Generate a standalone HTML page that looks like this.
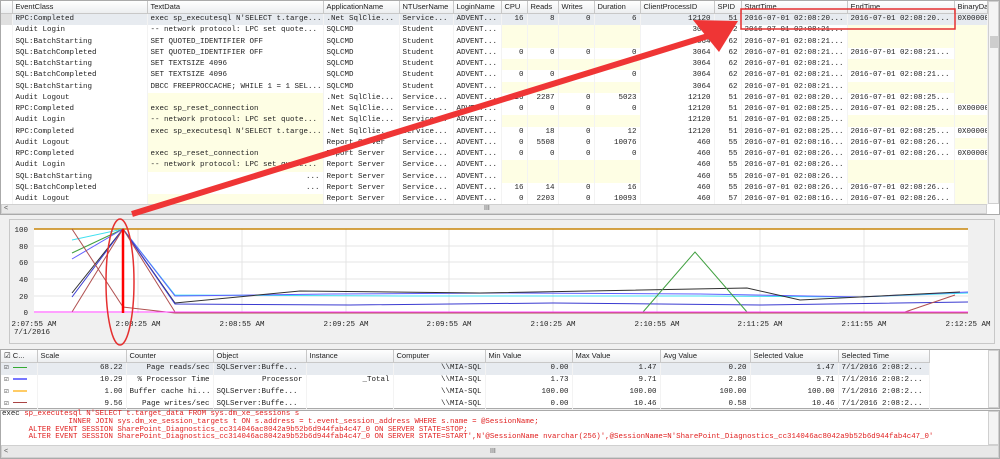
<!DOCTYPE html>
<html><head><meta charset="utf-8"><style>
*{margin:0;padding:0;box-sizing:border-box}
body{width:1000px;height:459px;background:#f0f0f0;position:relative;overflow:hidden;font-family:"Liberation Sans",sans-serif}
.abs{position:absolute}
table{border-collapse:collapse;table-layout:fixed;position:absolute}
td{font:7.5px/11.25px "Liberation Mono",monospace;color:#222;white-space:nowrap;overflow:hidden;padding:0 3px;height:11.25px;border-right:1px solid #f3f3f3}
th{font:7.5px/12px "Liberation Sans",sans-serif;color:#222;font-weight:normal;text-align:left;padding:0 3px;height:12px;background:linear-gradient(#fff,#eceef0);border-right:1px solid #c8c8c8;border-bottom:1px solid #c8c8c8;white-space:nowrap;overflow:hidden}
.r{text-align:right}.y{background:#fefee4}
tr.sel td{background:#e7ebf0}
.sb{background:#e8e8e8;border:1px solid #d0d0d0}
</style></head><body>
<div class="abs" style="left:0;top:0;width:1000px;height:215px;background:#fff;border:1px solid #aaa"></div>
<table style="left:1px;top:1px;width:986px">
<colgroup><col style="width:11px"><col style="width:135px"><col style="width:176px"><col style="width:76px"><col style="width:54px"><col style="width:48px"><col style="width:26px"><col style="width:31px"><col style="width:36px"><col style="width:46px"><col style="width:74px"><col style="width:27px"><col style="width:106px"><col style="width:107px"><col style="width:33px"></colgroup>
<tr><th></th><th>EventClass</th><th>TextData</th><th>ApplicationName</th><th>NTUserName</th><th>LoginName</th><th>CPU</th><th>Reads</th><th>Writes</th><th>Duration</th><th>ClientProcessID</th><th>SPID</th><th>StartTime</th><th>EndTime</th><th>BinaryDat</th></tr>
<tr class="sel"><td style="background:#e0e0e0"></td><td>RPC:Completed</td><td>exec sp_executesql N'SELECT t.targe...</td><td>.Net SqlClie...</td><td>Service...</td><td>ADVENT...</td><td class="r">16</td><td class="r">8</td><td class="r">0</td><td class="r">6</td><td class="r">12120</td><td class="r">51</td><td>2016-07-01 02:08:20...</td><td>2016-07-01 02:08:20...</td><td>0X00000</td></tr>
<tr><td></td><td>Audit Login</td><td>-- network protocol: LPC  set quote...</td><td>SQLCMD</td><td>Student</td><td>ADVENT...</td><td class="y"></td><td class="y"></td><td class="y"></td><td class="y"></td><td class="r">3064</td><td class="r">62</td><td>2016-07-01 02:08:21...</td><td class="y"></td><td class="y"></td></tr>
<tr><td></td><td>SQL:BatchStarting</td><td>SET QUOTED_IDENTIFIER OFF</td><td>SQLCMD</td><td>Student</td><td>ADVENT...</td><td class="y"></td><td class="y"></td><td class="y"></td><td class="y"></td><td class="r">3064</td><td class="r">62</td><td>2016-07-01 02:08:21...</td><td class="y"></td><td class="y"></td></tr>
<tr><td></td><td>SQL:BatchCompleted</td><td>SET QUOTED_IDENTIFIER OFF</td><td>SQLCMD</td><td>Student</td><td>ADVENT...</td><td class="r">0</td><td class="r">0</td><td class="r">0</td><td class="r">0</td><td class="r">3064</td><td class="r">62</td><td>2016-07-01 02:08:21...</td><td>2016-07-01 02:08:21...</td><td class="y"></td></tr>
<tr><td></td><td>SQL:BatchStarting</td><td>SET TEXTSIZE 4096</td><td>SQLCMD</td><td>Student</td><td>ADVENT...</td><td class="y"></td><td class="y"></td><td class="y"></td><td class="y"></td><td class="r">3064</td><td class="r">62</td><td>2016-07-01 02:08:21...</td><td class="y"></td><td class="y"></td></tr>
<tr><td></td><td>SQL:BatchCompleted</td><td>SET TEXTSIZE 4096</td><td>SQLCMD</td><td>Student</td><td>ADVENT...</td><td class="r">0</td><td class="r">0</td><td class="r">0</td><td class="r">0</td><td class="r">3064</td><td class="r">62</td><td>2016-07-01 02:08:21...</td><td>2016-07-01 02:08:21...</td><td class="y"></td></tr>
<tr><td></td><td>SQL:BatchStarting</td><td>DBCC FREEPROCCACHE; WHILE 1 = 1 SEL...</td><td>SQLCMD</td><td>Student</td><td>ADVENT...</td><td class="y"></td><td class="y"></td><td class="y"></td><td class="y"></td><td class="r">3064</td><td class="r">62</td><td>2016-07-01 02:08:21...</td><td class="y"></td><td class="y"></td></tr>
<tr><td></td><td>Audit Logout</td><td class="y"></td><td>.Net SqlClie...</td><td>Service...</td><td>ADVENT...</td><td class="r">16</td><td class="r">2287</td><td class="r">0</td><td class="r">5023</td><td class="r">12120</td><td class="r">51</td><td>2016-07-01 02:08:20...</td><td>2016-07-01 02:08:25...</td><td class="y"></td></tr>
<tr><td></td><td>RPC:Completed</td><td class="y">exec sp_reset_connection</td><td>.Net SqlClie...</td><td>Service...</td><td>ADVENT...</td><td class="r">0</td><td class="r">0</td><td class="r">0</td><td class="r">0</td><td class="r">12120</td><td class="r">51</td><td>2016-07-01 02:08:25...</td><td>2016-07-01 02:08:25...</td><td>0X00000</td></tr>
<tr><td></td><td>Audit Login</td><td class="y">-- network protocol: LPC  set quote...</td><td>.Net SqlClie...</td><td>Service...</td><td>ADVENT...</td><td class="y"></td><td class="y"></td><td class="y"></td><td class="y"></td><td class="r">12120</td><td class="r">51</td><td>2016-07-01 02:08:25...</td><td class="y"></td><td class="y"></td></tr>
<tr><td></td><td>RPC:Completed</td><td class="y">exec sp_executesql N'SELECT t.targe...</td><td>.Net SqlClie...</td><td>Service...</td><td>ADVENT...</td><td class="r">0</td><td class="r">18</td><td class="r">0</td><td class="r">12</td><td class="r">12120</td><td class="r">51</td><td>2016-07-01 02:08:25...</td><td>2016-07-01 02:08:25...</td><td>0X00000</td></tr>
<tr><td></td><td>Audit Logout</td><td class="y"></td><td>Report Server</td><td>Service...</td><td>ADVENT...</td><td class="r">0</td><td class="r">5508</td><td class="r">0</td><td class="r">10076</td><td class="r">460</td><td class="r">55</td><td>2016-07-01 02:08:16...</td><td>2016-07-01 02:08:26...</td><td class="y"></td></tr>
<tr><td></td><td>RPC:Completed</td><td class="y">exec sp_reset_connection</td><td>Report Server</td><td>Service...</td><td>ADVENT...</td><td class="r">0</td><td class="r">0</td><td class="r">0</td><td class="r">0</td><td class="r">460</td><td class="r">55</td><td>2016-07-01 02:08:26...</td><td>2016-07-01 02:08:26...</td><td>0X00000</td></tr>
<tr><td></td><td>Audit Login</td><td class="y">-- network protocol: LPC  set quote...</td><td>Report Server</td><td>Service...</td><td>ADVENT...</td><td class="y"></td><td class="y"></td><td class="y"></td><td class="y"></td><td class="r">460</td><td class="r">55</td><td>2016-07-01 02:08:26...</td><td class="y"></td><td class="y"></td></tr>
<tr><td></td><td>SQL:BatchStarting</td><td class="r">...</td><td>Report Server</td><td>Service...</td><td>ADVENT...</td><td class="y"></td><td class="y"></td><td class="y"></td><td class="y"></td><td class="r">460</td><td class="r">55</td><td>2016-07-01 02:08:26...</td><td class="y"></td><td class="y"></td></tr>
<tr><td></td><td>SQL:BatchCompleted</td><td class="r">...</td><td>Report Server</td><td>Service...</td><td>ADVENT...</td><td class="r">16</td><td class="r">14</td><td class="r">0</td><td class="r">16</td><td class="r">460</td><td class="r">55</td><td>2016-07-01 02:08:26...</td><td>2016-07-01 02:08:26...</td><td class="y"></td></tr>
<tr><td></td><td>Audit Logout</td><td class="y"></td><td>Report Server</td><td>Service...</td><td>ADVENT...</td><td class="r">0</td><td class="r">2203</td><td class="r">0</td><td class="r">10093</td><td class="r">460</td><td class="r">57</td><td>2016-07-01 02:08:16...</td><td>2016-07-01 02:08:26...</td><td class="y"></td></tr>
</table>
<div class="abs sb" style="left:988px;top:1px;width:11px;height:203px;background:#f4f4f4"></div>
<div class="abs" style="left:990px;top:36px;width:8px;height:12px;background:#cdcdcd"></div>
<div class="abs sb" style="left:1px;top:204px;width:986px;height:10px;font-size:7px;line-height:8px;color:#555">&nbsp;&lt;<span style="position:absolute;left:482px">III</span></div>
<div class="abs" style="left:9px;top:219px;width:986px;height:125px;border:1px solid #c8c8c8;background:#f0f0f0"></div>
<svg class="abs" style="left:0;top:0" width="1000" height="459" font-family="Liberation Mono,monospace" font-size="7.5">
<rect x="34" y="229" width="934" height="84" fill="#fff"/>
<g stroke="#e4e4e4" stroke-width="1">
<line x1="34" y1="246" x2="968" y2="246"/><line x1="34" y1="262" x2="968" y2="262"/><line x1="34" y1="279" x2="968" y2="279"/><line x1="34" y1="296" x2="968" y2="296"/>
<line x1="138" y1="229" x2="138" y2="313"/><line x1="242" y1="229" x2="242" y2="313"/><line x1="346" y1="229" x2="346" y2="313"/><line x1="449" y1="229" x2="449" y2="313"/><line x1="553" y1="229" x2="553" y2="313"/><line x1="657" y1="229" x2="657" y2="313"/><line x1="760" y1="229" x2="760" y2="313"/><line x1="864" y1="229" x2="864" y2="313"/>
</g>
<line x1="34" y1="229" x2="968" y2="229" stroke="#c8860a" stroke-width="1.5"/>
<g fill="#222" text-anchor="end"><text x="28" y="232">100</text><text x="28" y="249">80</text><text x="28" y="265">60</text><text x="28" y="282">40</text><text x="28" y="299">20</text><text x="28" y="315">0</text></g>
<g fill="#222" text-anchor="middle"><text x="34" y="326">2:07:55 AM</text><text x="32" y="334">7/1/2016</text><text x="138" y="326">2:08:25 AM</text><text x="242" y="326">2:08:55 AM</text><text x="346" y="326">2:09:25 AM</text><text x="449" y="326">2:09:55 AM</text><text x="553" y="326">2:10:25 AM</text><text x="657" y="326">2:10:55 AM</text><text x="760" y="326">2:11:25 AM</text><text x="864" y="326">2:11:55 AM</text><text x="968" y="326">2:12:25 AM</text></g>
<g fill="none" stroke-width="1">
<polyline stroke="#40e0f0" points="72,240 123,229 175,295 400,296 553,296 700,296 860,297 968,293"/>
<polyline stroke="#40a040" points="72,253 123,229"/>
<polyline stroke="#6060ff" points="72,259 123,229 175,296 330,294 500,293 700,294 860,297 968,292"/>
<polyline stroke="#303030" points="72,293 123,229 175,303 300,291 480,293 747,288 800,300 960,292"/>
<polyline stroke="#3a3ad0" points="72,297 123,229 175,304 350,305 553,303 760,305 968,302"/>
<polyline stroke="#b05050" points="72,229 123,307 175,313 968,313"/>
<polyline stroke="#b05050" points="72,312 123,229 175,312"/>
<polyline stroke="#b05050" points="902,313 955,295"/>
<polyline stroke="#40a040" points="643,312 695,252 747,312"/>
<line x1="34" y1="312" x2="968" y2="312" stroke="#ff40ff"/>
</g>
<line x1="123" y1="229" x2="123" y2="313" stroke="#f00" stroke-width="2.5"/>
<ellipse cx="120" cy="282" rx="14" ry="63" fill="none" stroke="#e53030" stroke-width="1.5"/>
<rect x="741" y="9" width="214" height="20" fill="none" stroke="#e53030" stroke-width="1.5"/>
<line x1="132" y1="214" x2="708" y2="36" stroke="#ef3535" stroke-width="6"/>
<polygon points="738,21 693,20 719,52" fill="#ef3535"/>
</svg>
<div class="abs" style="left:0;top:349px;width:1000px;height:60px;background:#fff;border:1px solid #aaa"></div>
<table style="left:1px;top:350px;width:928px">
<colgroup><col style="width:36px"><col style="width:89px"><col style="width:87px"><col style="width:93px"><col style="width:87px"><col style="width:92px"><col style="width:87px"><col style="width:88px"><col style="width:90px"><col style="width:88px"><col style="width:91px"></colgroup>
<tr><th>&#9745; C...</th><th>Scale</th><th>Counter</th><th>Object</th><th>Instance</th><th>Computer</th><th>Min Value</th><th>Max Value</th><th>Avg Value</th><th>Selected Value</th><th>Selected Time</th></tr>
<tr class="sel"><td style="height:12px">&#9745; <span style="display:inline-block;width:14px;border-top:1.5px solid #3a3;vertical-align:middle"></span></td><td class="r">68.22</td><td class="r">Page reads/sec</td><td>SQLServer:Buffe...</td><td></td><td class="r">\\MIA-SQL</td><td class="r">0.00</td><td class="r">1.47</td><td class="r">0.20</td><td class="r">1.47</td><td>7/1/2016 2:08:2...</td></tr>
<tr><td style="height:12px">&#9745; <span style="display:inline-block;width:14px;border-top:2px solid #77f;vertical-align:middle"></span></td><td class="r">10.29</td><td class="r">% Processor Time</td><td class="r">Processor</td><td class="r">_Total</td><td class="r">\\MIA-SQL</td><td class="r">1.73</td><td class="r">9.71</td><td class="r">2.80</td><td class="r">9.71</td><td>7/1/2016 2:08:2...</td></tr>
<tr><td style="height:12px">&#9745; <span style="display:inline-block;width:14px;border-top:2px solid #fc6;vertical-align:middle"></span></td><td class="r">1.00</td><td class="r">Buffer cache hi...</td><td>SQLServer:Buffe...</td><td></td><td class="r">\\MIA-SQL</td><td class="r">100.00</td><td class="r">100.00</td><td class="r">100.00</td><td class="r">100.00</td><td>7/1/2016 2:08:2...</td></tr>
<tr><td style="height:12px">&#9745; <span style="display:inline-block;width:14px;border-top:1.5px solid #a44;vertical-align:middle"></span></td><td class="r">9.56</td><td class="r">Page writes/sec</td><td>SQLServer:Buffe...</td><td></td><td class="r">\\MIA-SQL</td><td class="r">0.00</td><td class="r">10.46</td><td class="r">0.58</td><td class="r">10.46</td><td>7/1/2016 2:08:2...</td></tr>
</table>
<div class="abs sb" style="left:988px;top:350px;width:11px;height:58px;background:#f4f4f4"></div>
<div class="abs" style="left:0;top:410px;width:1000px;height:49px;background:#fff;border:1px solid #aaa"></div>
<div class="abs" style="left:2px;top:411px;font:7.4px/7.8px 'Liberation Mono',monospace;color:#e02020;white-space:pre"><span style="color:#222">exec </span>sp_executesql N'SELECT t.target_data FROM sys.dm_xe_sessions s
               INNER JOIN sys.dm_xe_session_targets t ON s.address = t.event_session_address WHERE s.name = @SessionName;
      ALTER EVENT SESSION SharePoint_Diagnostics_cc314046ac8042a9b52b6d944fab4c47_0 ON SERVER STATE=STOP;
      ALTER EVENT SESSION SharePoint_Diagnostics_cc314046ac8042a9b52b6d944fab4c47_0 ON SERVER STATE=START',N'@SessionName nvarchar(256)',@SessionName=N'SharePoint_Diagnostics_cc314046ac8042a9b52b6d944fab4c47_0'</div>
<div class="abs sb" style="left:988px;top:411px;width:11px;height:34px;background:#f4f4f4"></div>
<div class="abs sb" style="left:1px;top:445px;width:998px;height:13px;font-size:7px;line-height:11px;color:#555">&nbsp;&lt;<span style="position:absolute;left:488px">III</span></div>
</body></html>
